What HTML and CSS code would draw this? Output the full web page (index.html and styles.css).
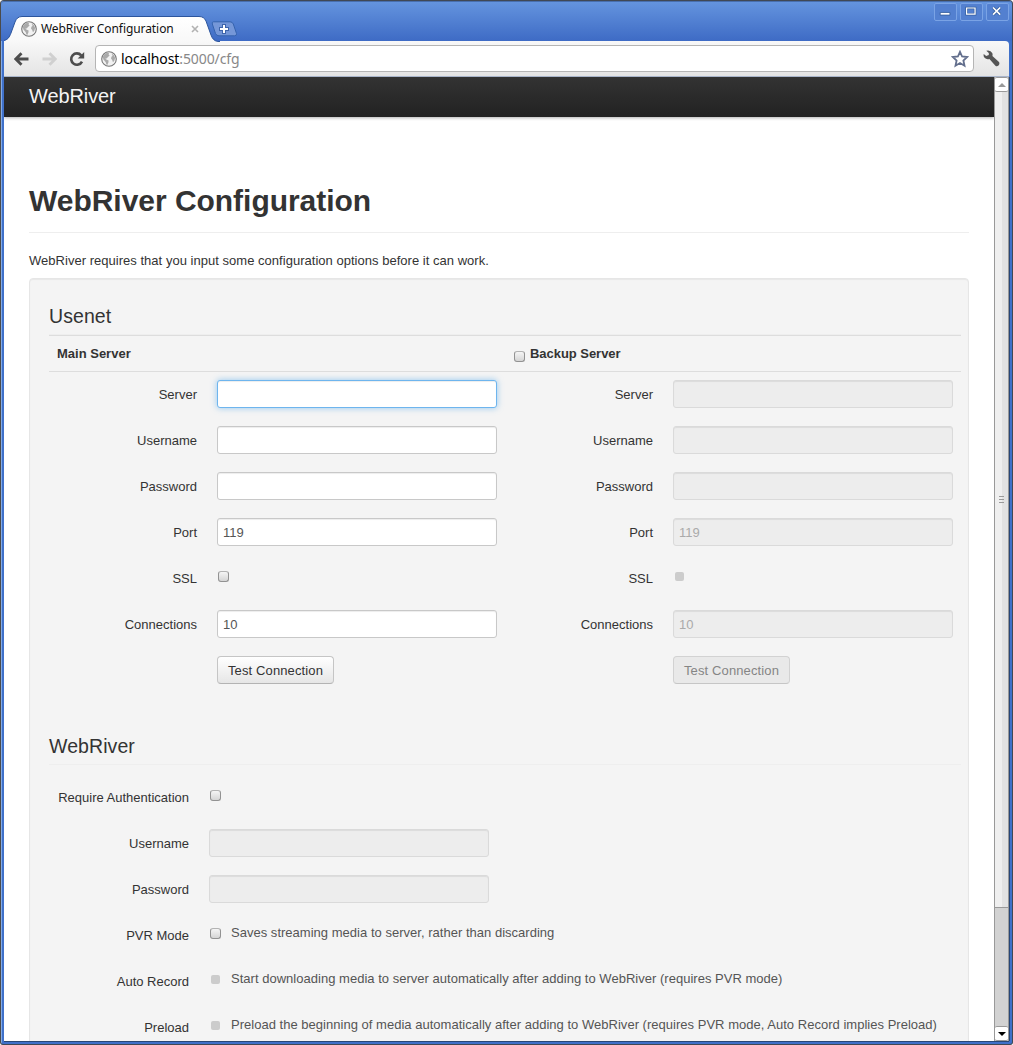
FILE: index.html
```html
<!DOCTYPE html>
<html lang="en">
<head>
<meta charset="utf-8">
<title>WebRiver Configuration</title>
<link rel="stylesheet" href="styles.css">
</head>
<body>
<svg class="symbols" width="0" height="0">
  <symbol id="globe" viewBox="0 0 16 16">
    <circle cx="8" cy="8" r="7.3" fill="#f2f2f2" stroke="#777" stroke-width="1.1"/>
    <path d="M3 3.5 6 1.8 8 2 7.6 3.6 8.6 4.6 7 6 5.6 7.4 4.3 7.4 5.3 8.6 7.6 9.6 7.4 11.6 6.3 13.9 5.4 13.4 4.6 11 2.4 8.5 1.8 6Z" fill="#aaa"/>
    <path d="M10.5 2.6 13 4.2 14.1 7 13.3 9.8 12 11.3 11.2 9 10 7.6 10.5 5.8 11.6 4.7Z" fill="#aaa"/>
  </symbol>
</svg>
<div class="window">
  <header class="titlebar">
    <div class="tab">
      <svg class="tab-shape" width="216" height="26" viewBox="0 0 216 26">
        <defs><linearGradient id="tabfill" x1="0" y1="0" x2="0" y2="1"><stop offset="0" stop-color="#fff"/><stop offset="1" stop-color="#f8f8f8"/></linearGradient></defs>
        <path d="M0 25C4 24 5 22 7 17L11 6Q13 .5 18 .5H195Q200 .5 202 5L207 19Q209 25 214 25.5L216 26H0Z" fill="url(#tabfill)"/>
        <path d="M0 24.5C4 23 5 22 7 17L11 6Q13 .5 18 .5H195Q200 .5 202 5L207 19Q209 25 214 25.5H216" fill="none" stroke="#2c559d"/>
      </svg>
      <svg class="favicon" width="16" height="16"><use href="#globe"/></svg>
      <span class="tab-title">WebRiver Configuration</span>
      <svg class="tab-close" width="8" height="8" viewBox="0 0 8 8"><path d="M1 1 7 7M7 1 1 7" stroke="#b2b2b2" stroke-width="1.6"/></svg>
    </div>
    <svg class="new-tab" width="27" height="16" viewBox="0 0 27 16">
      <path d="M2.5.8H19Q21.5.8 22.3 3L25.5 12.5Q26 14.8 23.5 14.8H8Q5.5 14.8 4.5 12.5L1.3 3Q.8.8 2.5.8Z" fill="#7597d8" stroke="#3563ae"/>
      <path d="M13 3V13M8 8H18" stroke="#3e65ab" stroke-width="4"/>
      <path d="M13 4V12M9 8H17" stroke="#fff" stroke-width="2"/>
    </svg>
    <div class="window-buttons">
      <svg width="23" height="18" viewBox="0 0 23 18"><path d="M5.5 9.5H16.5V12.5H5.5Z" fill="#fff" stroke="#365f9f"/></svg>
      <svg width="23" height="18" viewBox="0 0 23 18"><path d="M6 4.5H15.5V11.5H6Z" fill="none" stroke="#365f9f" stroke-width="3"/><path d="M6 4.5H15.5V11.5H6Z" fill="none" stroke="#fff" stroke-width="1.4"/></svg>
      <svg width="23" height="18" viewBox="0 0 23 18"><path d="M6.5 4 14.5 12M14.5 4 6.5 12" stroke="#365f9f" stroke-width="3.5"/><path d="M6.5 4 14.5 12M14.5 4 6.5 12" stroke="#fff" stroke-width="1.8"/></svg>
    </div>
  </header>
  <nav class="toolbar">
    <svg width="15" height="14" viewBox="0 0 15 14"><path d="M7.5 1.2 1.8 7 7.5 12.8M2 7H14.5" fill="none" stroke="#4d4d4d" stroke-width="2.8"/></svg>
    <svg class="forward" width="15" height="14" viewBox="0 0 15 14"><path d="M7.5 1.2 13.2 7 7.5 12.8M13 7H.5" fill="none" stroke="#d0d0d0" stroke-width="2.8"/></svg>
    <svg class="reload" width="16" height="16" viewBox="0 0 16 16"><path d="M12.2 4.3A5.7 5.7 0 1 0 13 10.6" fill="none" stroke="#4d4d4d" stroke-width="2.6"/><path d="M15.2 1V7.5H8.7Z" fill="#4d4d4d"/></svg>
    <div class="omnibox">
      <svg width="16" height="16"><use href="#globe"/></svg>
      <span class="url">localhost<span class="path">:5000/cfg</span></span>
      <svg class="star" width="18" height="18" viewBox="0 0 18 18"><path d="M9 1.8 11.1 6.5 16.2 7 12.4 10.5 13.5 15.7 9 13 4.5 15.7 5.6 10.5 1.8 7 6.9 6.5Z" fill="#fff" stroke="#636f8d" stroke-width="1.8"/></svg>
    </div>
    <svg class="wrench" width="17" height="17" viewBox="0 0 17 17"><path d="M3.3.8Q7.5-.2 9.2 3.1Q9.9 4.5 9.4 5.9L16 12.1Q17 14 15.5 15.5Q14 17 12.4 15.8L6.4 8.9Q3.5 9.8 1.6 7.8Q.2 6.4.7 3.9L3.2 6 5.8 5 5.8 3Z" fill="#555"/></svg>
  </nav>
  <div class="viewport">
    <main class="page">
      <div class="navbar"><a class="brand">WebRiver</a></div>
      <div class="container">
        <div class="page-header"><h1>WebRiver Configuration</h1></div>
        <p>WebRiver requires that you input some configuration options before it can work.</p>
        <form class="well">
          <fieldset>
            <div class="legend">Usenet</div>
            <div class="server-head">
              <div class="main-head">Main Server</div>
              <label class="backup-head"><input type="checkbox"><span>Backup Server</span></label>
            </div>
            <div class="servers">
              <div class="server">
                <div class="row"><label>Server</label><input class="text focused" type="text"></div>
                <div class="row"><label>Username</label><input class="text" type="text"></div>
                <div class="row"><label>Password</label><input class="text" type="password"></div>
                <div class="row"><label>Port</label><input class="text" type="text" value="119"></div>
                <div class="row"><label>SSL</label><input type="checkbox"></div>
                <div class="row"><label>Connections</label><input class="text" type="text" value="10"></div>
                <div class="row action"><button class="btn" type="button">Test Connection</button></div>
              </div>
              <div class="server">
                <div class="row"><label>Server</label><input class="text" type="text" disabled></div>
                <div class="row"><label>Username</label><input class="text" type="text" disabled></div>
                <div class="row"><label>Password</label><input class="text" type="password" disabled></div>
                <div class="row"><label>Port</label><input class="text" type="text" value="119" disabled></div>
                <div class="row"><label>SSL</label><input type="checkbox" disabled></div>
                <div class="row"><label>Connections</label><input class="text" type="text" value="10" disabled></div>
                <div class="row action"><button class="btn" type="button" disabled>Test Connection</button></div>
              </div>
            </div>
          </fieldset>
          <fieldset class="options">
            <div class="legend">WebRiver</div>
            <div class="row"><label>Require Authentication</label><input type="checkbox"></div>
            <div class="row"><label>Username</label><input class="text" type="text" disabled></div>
            <div class="row"><label>Password</label><input class="text" type="password" disabled></div>
            <div class="row"><label>PVR Mode</label><input type="checkbox"><span class="hint">Saves streaming media to server, rather than discarding</span></div>
            <div class="row"><label>Auto Record</label><input type="checkbox" disabled><span class="hint">Start downloading media to server automatically after adding to WebRiver (requires PVR mode)</span></div>
            <div class="row"><label>Preload</label><input type="checkbox" disabled><span class="hint">Preload the beginning of media automatically after adding to WebRiver (requires PVR mode, Auto Record implies Preload)</span></div>
          </fieldset>
        </form>
      </div>
    </main>
    <div class="scrollbar">
      <div class="arrow up"></div>
      <div class="thumb"><i></i><i></i><i></i></div>
      <div class="track"></div>
      <div class="arrow down"></div>
    </div>
  </div>
</div>
</body>
</html>
```
FILE: styles.css
```css
* { box-sizing: border-box; }
body { margin: 0; height: 1045px; overflow: hidden; background: #fff; font: 13px/18px "Liberation Sans", Arial, sans-serif; color: #333; }
svg { display: block; flex: none; }
.symbols { position: absolute; }

.window { height: 1045px; display: flex; flex-direction: column; padding: 0 3px 3px; background: #3f70c9; border: 1px solid #404854; border-left-color: #4b4b4b; border-radius: 4px 4px 3px 3px; box-shadow: inset 1px 1px #83abe8; }
.titlebar { height: 40px; flex: none; display: flex; align-items: flex-start; margin: 0 -3px; padding-left: 3px; background: linear-gradient(#6595df, #3e6bc5); border-radius: 3px 3px 0 0; box-shadow: inset 0 1px #486fae; }
.tab { position: relative; width: 206px; height: 25px; margin-top: 15px; display: flex; align-items: center; }
.tab-shape { position: absolute; left: 0; top: 0; }
.favicon { position: relative; margin-left: 17px; }
.tab-title { position: relative; margin-left: 4px; width: 133px; white-space: nowrap; font: 12px/18px "Noto Sans", sans-serif; letter-spacing: -0.08px; color: #111; }
.tab-close { position: relative; margin-left: 17px; }
.new-tab { position: relative; margin-top: 20px; margin-left: 1px; }
.window-buttons { display: flex; gap: 3px; margin: 2px 3px 0 auto; }
.window-buttons svg { border: 1px solid #7aa3e5; border-radius: 2px; background: #5380d0; }

.toolbar { height: 36px; flex: none; display: flex; align-items: center; padding: 0 5px 0 10px; background: linear-gradient(#f8f8f8, #e4e4e4); border-bottom: 1px solid #a9b5ca; border-radius: 0 4px 0 0; }
.forward { margin-left: 13px; }
.reload { margin-left: 12px; }
.omnibox { flex: 1; height: 27px; margin: 0 9px 0 10px; padding: 0 4px 0 5px; display: flex; align-items: center; background: #fff; border: 1px solid #b5b5b5; border-radius: 4px; }
.url { flex: 1; margin-left: 4px; font: 14px/20px "Noto Sans", sans-serif; letter-spacing: -.1px; color: #000; }
.path { color: #888; }
.wrench { margin-right: 4px; }

.viewport { flex: 1; min-height: 0; display: flex; background: #fff; box-shadow: 0 1px #284777, 1px 0 #284777; }
.page { flex: 1; min-width: 0; overflow: hidden; }
.navbar { height: 40px; padding: 9px 25px; background: linear-gradient(#333, #222); box-shadow: 0 1px 3px rgba(0,0,0,.3); }
.brand { font-size: 20px; line-height: 20px; letter-spacing: -.1px; color: #f4f4f4; }
.container { padding: 68px 25px 0; }
.page-header { height: 48px; border-bottom: 1px solid #eee; margin-bottom: 18px; }
h1 { margin: 0; padding-top: 1px; font-size: 30px; line-height: 30px; letter-spacing: -.03px; }
p { margin: 0 0 8px; padding-top: 1px; letter-spacing: .025px; }
.well { min-height: 800px; padding: 19px; background: #f4f4f4; border: 1px solid #e6e6e6; border-radius: 4px; box-shadow: inset 0 1px 1px rgba(0,0,0,.05); }
fieldset { width: 912px; margin: 0; padding: 0; border: 0; }
.legend { height: 37px; font-size: 19.5px; line-height: 36px; letter-spacing: .08px; border-bottom: 1px solid #eee; }
.server-head { height: 37px; display: grid; grid-template-columns: 456px 456px; padding-top: 9px; border: solid #ddd; border-width: 1px 0; font-weight: bold; }
.main-head { padding-left: 8px; }
.backup-head { display: flex; padding-left: 8px; }
.backup-head span { margin-left: 5px; letter-spacing: -.04px; }
.backup-head input[type=checkbox] { margin-top: 6px; }
.servers { display: grid; grid-template-columns: 456px 456px; padding-top: 8px; }
.server { padding-left: 8px; }
.row { height: 28px; margin-bottom: 18px; display: flex; align-items: flex-start; }
.row label { width: 140px; margin-right: 20px; padding-top: 6px; text-align: right; }
.action { padding-left: 160px; }
.options { margin-top: 26px; }
.options .legend { margin-bottom: 18px; }
.text { width: 280px; height: 28px; margin: 0; padding: 5px; font: 13px/18px "Liberation Sans", Arial, sans-serif; color: #555; background: #fff; border: 1px solid #c8c8c8; border-radius: 3px; box-shadow: inset 0 1px 1px rgba(0,0,0,.075); outline: 0; }
.text.focused { border-color: #6eb5ee; box-shadow: inset 0 1px 1px rgba(0,0,0,.075), 0 0 6px rgba(82,168,236,.6); }
.text:disabled { color: #aaa; background: #ededed; border-color: #dadada; }
input[type=checkbox] { appearance: none; flex: none; width: 11px; height: 11px; margin: 7px 0 0 1px; border: 1px solid #929292; border-top-color: #b3b3b3; border-radius: 3px; background: linear-gradient(#f5f5f5, #d5d5d5); }
input[type=checkbox]:disabled { width: 9px; height: 9px; margin: 8px 1px 0 2px; border: 0; border-radius: 2px; background: #ccc; }
.hint { margin: 3px 0 0 10px; letter-spacing: .02px; color: #555; white-space: nowrap; }
.btn { width: 117px; height: 28px; padding: 1px 0 0; font: 13px/18px "Liberation Sans", Arial, sans-serif; letter-spacing: .12px; color: #333; background: linear-gradient(#fff, #e6e6e6); border: 1px solid #c5c5c5; border-bottom-color: #b3b3b3; border-radius: 4px; }
.btn:disabled { color: #858585; background: #e9e9e9; border-color: #d2d2d2 #d2d2d2 #c6c6c6; }

.scrollbar { width: 15px; display: flex; flex-direction: column; background: #d2d2d2; border: solid #999; border-width: 0 1px; }
.arrow { height: 15px; display: flex; justify-content: center; align-items: center; background: #fff; border: solid #999; border-width: 1px 0; border-radius: 2px; }
.arrow::before { content: ""; border: 4px solid transparent; }
.up::before { border-top: 0; border-bottom-color: #999; }
.down::before { border-bottom: 0; border-top-color: #000; }
.thumb { height: 816px; display: flex; flex-direction: column; align-items: center; justify-content: center; gap: 2px; background: linear-gradient(90deg, #efefef 50%, #e2e2e2 50%); border-bottom: 1px solid #999; }
.thumb i { width: 5px; height: 1px; background: #999; }
.track { flex: 1; }
```
